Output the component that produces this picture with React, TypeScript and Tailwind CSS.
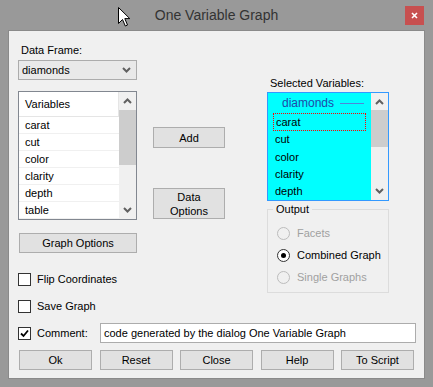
import type { ReactNode } from 'react'

const variables = ['carat', 'cut', 'color', 'clarity', 'depth', 'table']
const selected = ['carat', 'cut', 'color', 'clarity', 'depth']

function Chevron({ up }: { up?: boolean }) {
	return (
		<svg width="9" height="6" viewBox="0 0 9 6" className="block">
			<polyline
				points={up ? '1,5 4.5,1.5 8,5' : '1,1 4.5,4.5 8,1'}
				fill="none"
				stroke="#606060"
				strokeWidth="2"
			/>
		</svg>
	)
}

function ScrollBar({ thumbTop, thumbHeight }: { thumbTop: number; thumbHeight: number }) {
	return (
		<div className="relative w-[17px] h-full bg-[#f0f0f0] flex flex-col justify-between items-center py-[6px]">
			<Chevron up />
			<div className="absolute left-0 w-[17px] bg-[#cdcdcd]" style={{ top: thumbTop, height: thumbHeight }} />
			<Chevron />
		</div>
	)
}

function Button({ children, className = '' }: { children: ReactNode; className?: string }) {
	return (
		<div className={`flex items-center justify-center text-center leading-[14px] bg-[#e1e1e1] border border-[#adadad] ${className}`}>
			{children}
		</div>
	)
}

function CheckBox({ checked }: { checked?: boolean }) {
	return (
		<div className="w-[13px] h-[13px] border border-[#333333] bg-white flex items-center justify-center shrink-0">
			{checked && (
				<svg width="9" height="9" viewBox="0 0 9 9">
					<polyline points="1,4.5 3.5,7 8,1.5" fill="none" stroke="#000" strokeWidth="1.8" />
				</svg>
			)}
		</div>
	)
}

function Radio({ label, checked, disabled }: { label: string; checked?: boolean; disabled?: boolean }) {
	return (
		<div className="flex items-center h-[22px]">
			<div
				className={`w-[13px] h-[13px] rounded-full border flex items-center justify-center ${
					disabled ? 'border-[#bcbcbc] bg-[#f0f0f0]' : 'border-[#333333] bg-white'
				}`}
			>
				{checked && <div className="w-[5px] h-[5px] rounded-full bg-black" />}
			</div>
			<span className={`ml-[7px] ${disabled ? 'text-[#a0a0a0]' : 'text-black'}`}>{label}</span>
		</div>
	)
}

export default function App() {
	return (
		<div className="relative w-[433px] h-[387px] bg-[#999999] flex flex-col font-['Liberation_Sans',sans-serif] text-[11px] text-black">
			{/* title bar */}
			<div className="relative h-[30px] flex items-center justify-center">
				<span className="text-[14px] text-[#333333]">One Variable Graph</span>
				<div className="absolute left-[405px] top-[6px] w-[19px] h-[19px] bg-[#c75050] flex items-center justify-center">
					<svg width="7" height="7" viewBox="0 0 7 7">
						<path d="M1 1 L6 6 M6 1 L1 6" stroke="#fff" strokeWidth="1.6" />
					</svg>
				</div>
				<svg className="absolute left-[118px] top-[7px]" width="13" height="20" viewBox="0 0 13 20">
					<path d="M0.5 0.5 L0.5 16.5 L4.5 12.5 L7.3 19 L9.5 18 L6.8 11.6 L11.8 11.6 Z" fill="#fff" stroke="#000" strokeWidth="1" />
				</svg>
			</div>

			{/* client area */}
			<div className="mx-[8px] h-[349px] bg-[#f0f0f0] border border-[#8a8a8a] flex flex-col">
				<div className="flex pl-[9px]">
					{/* left column */}
					<div className="w-[119px] flex flex-col pt-[12px]">
						<div className="h-[14px] leading-[14px] pl-[3px]">Data Frame:</div>
						<div className="mt-[3px] h-[20px] border border-[#acacac] bg-[#e9e9e9] flex items-center justify-between pl-[3px] pr-[5px]">
							<span>diamonds</span>
							<Chevron />
						</div>
						<div className="mt-[11px] h-[129px] border border-[#828790] bg-white flex">
							<div className="flex-1 flex flex-col">
								<div className="h-[25px] border-b border-r border-[#e5e5e5] flex items-center pl-[6px]">Variables</div>
								{variables.map(v => (
									<div key={v} className="h-[17px] border-b border-[#f0f0f0] flex items-center pl-[6px]">
										{v}
									</div>
								))}
							</div>
							<ScrollBar thumbTop={18} thumbHeight={55} />
						</div>
						<Button className="mt-[13px] ml-[1px] h-[20px]">Graph Options</Button>
						<div className="mt-[20px] h-[13px] flex items-center">
							<CheckBox />
							<span className="ml-[6px]">Flip Coordinates</span>
						</div>
						<div className="mt-[14px] h-[13px] flex items-center">
							<CheckBox />
							<span className="ml-[6px]">Save Graph</span>
						</div>
					</div>

					{/* middle column */}
					<div className="ml-[16px] w-[72px] flex flex-col">
						<Button className="mt-[96px] h-[21px]">Add</Button>
						<Button className="mt-[40px] h-[31px]">
							Data
							<br />
							Options
						</Button>
					</div>

					{/* right column */}
					<div className="ml-[42px] w-[122px] flex flex-col">
						<div className="mt-[45px] h-[14px] leading-[14px] pl-[3px]">Selected Variables:</div>
						<div className="mt-[2px] h-[109px] border border-[#3399ff] bg-[#00ffff] flex">
							<div className="flex-1 flex flex-col pl-[5px] pr-[5px]">
								<div className="h-[21px] flex items-center pl-[9px] text-[12px] text-[#1f4aa8]">
									<span>diamonds</span>
									<div className="ml-[6px] w-[24px] h-px bg-[#4f86d8]" />
								</div>
								{selected.map((v, i) => (
									<div
										key={v}
										className={`h-[18px] flex items-center pl-[2px] ${i === 0 ? 'border border-dotted border-[#ff0000]' : ''}`}
									>
										{v}
									</div>
								))}
							</div>
							<ScrollBar thumbTop={17} thumbHeight={37} />
						</div>
						<div className="relative mt-[8px] h-[84px] border border-[#dcdcdc] flex flex-col pl-[9px] pt-[12px]">
							<span className="absolute left-[5px] top-[-8px] px-[3px] bg-[#f0f0f0] leading-[14px]">Output</span>
							<Radio label="Facets" disabled />
							<Radio label="Combined Graph" checked />
							<Radio label="Single Graphs" disabled />
						</div>
					</div>
				</div>

				{/* comment row */}
				<div className="mt-[10px] h-[20px] flex items-center pl-[9px] pr-[8px]">
					<CheckBox checked />
					<span className="ml-[6px] w-[63px]">Comment:</span>
					<div className="flex-1 h-[20px] border border-[#acacac] bg-white flex items-center pl-[3px]">
						code generated by the dialog One Variable Graph
					</div>
				</div>

				{/* buttons */}
				<div className="mt-[7px] flex justify-between px-[10px]">
					{['Ok', 'Reset', 'Close', 'Help', 'To Script'].map(b => (
						<Button key={b} className="w-[73px] h-[20px]">
							{b}
						</Button>
					))}
				</div>
			</div>
		</div>
	)
}
